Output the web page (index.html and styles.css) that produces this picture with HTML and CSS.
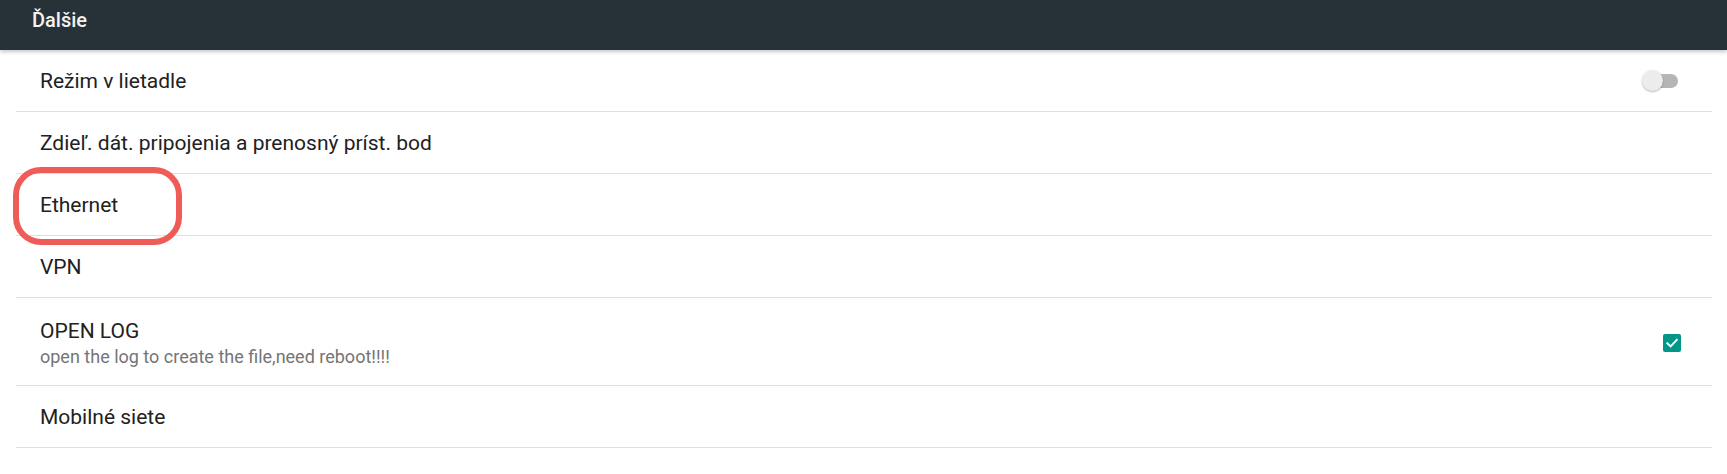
FILE: index.html
```html
<!DOCTYPE html>
<html lang="sk">
<head>
<meta charset="utf-8">
<title>Ďalšie</title>
<link rel="stylesheet" href="styles.css">
</head>
<body>
<header class="appbar"><h1 class="appbar-title">Ďalšie</h1></header>
<main class="list">
  <div class="row">
    <span class="row-title">Režim v lietadle</span>
    <span class="switch"><span class="switch-track"></span><span class="switch-thumb"></span></span>
  </div>
  <div class="row">
    <span class="row-title">Zdieľ. dát. pripojenia a prenosný príst. bod</span>
  </div>
  <div class="row row-highlight">
    <span class="row-title">Ethernet</span>
    <span class="highlight"></span>
  </div>
  <div class="row">
    <span class="row-title">VPN</span>
  </div>
  <div class="row row-tall">
    <div class="row-text">
      <span class="row-title">OPEN LOG</span>
      <span class="row-summary">open the log to create the file,need reboot!!!!</span>
    </div>
    <span class="checkbox">
      <svg viewBox="0 0 18 18" width="18" height="18"><path d="M4.3 9.3 L7.6 12.4 L13.8 5.9" fill="none" stroke="#fff" stroke-width="2" stroke-linecap="square"/></svg>
    </span>
  </div>
  <div class="row">
    <span class="row-title">Mobilné siete</span>
  </div>
</main>
</body>
</html>
```
FILE: styles.css
```css
html, body {
  margin: 0;
  padding: 0;
  background: #fff;
}
body {
  font-family: Roboto, "Noto Sans", "Liberation Sans", sans-serif;
  color: #212121;
}
.appbar {
  height: 50px;
  box-sizing: border-box;
  background: #263238;
  padding: 8px 32px 0;
  box-shadow: 0 2px 4px rgba(0, 0, 0, 0.22);
  position: relative;
  z-index: 1;
}
.appbar-title {
  margin: 0;
  font-size: 20px;
  line-height: 24px;
  font-weight: 500;
  color: #f2f2f2;
}
.list {
  padding: 0 15px 0 16px;
}
.row {
  position: relative;
  display: flex;
  align-items: center;
  justify-content: space-between;
  height: 62px;
  box-sizing: border-box;
  border-bottom: 1px solid #e0e0e0;
  padding: 0 31px 0 24px;
}
.row-tall {
  height: 88px;
  padding-top: 2px;
}
.row-title {
  font-size: 21px;
  line-height: 28px;
  color: #212121;
}
.row-text {
  display: flex;
  flex-direction: column;
}
.row-summary {
  margin-top: 1px;
  font-size: 18px;
  line-height: 22px;
  color: #757575;
}
.switch {
  position: relative;
  width: 36px;
  height: 22px;
  margin-right: 3px;
}
.switch-track {
  position: absolute;
  left: 2px;
  right: 0;
  top: 4px;
  height: 14px;
  border-radius: 7px;
  background: #b5b5b5;
}
.switch-thumb {
  position: absolute;
  left: 0;
  top: 0;
  width: 21px;
  height: 21px;
  border-radius: 50%;
  background: #ececec;
  box-shadow: 0 1px 2px rgba(0, 0, 0, 0.28);
}
.checkbox {
  width: 18px;
  height: 18px;
  border-radius: 2px;
  background: #009688;
  display: flex;
}
.highlight {
  position: absolute;
  left: -3px;
  top: -7px;
  width: 169px;
  height: 78px;
  box-sizing: border-box;
  border: 6px solid #ef5b57;
  border-radius: 28px;
}
```
